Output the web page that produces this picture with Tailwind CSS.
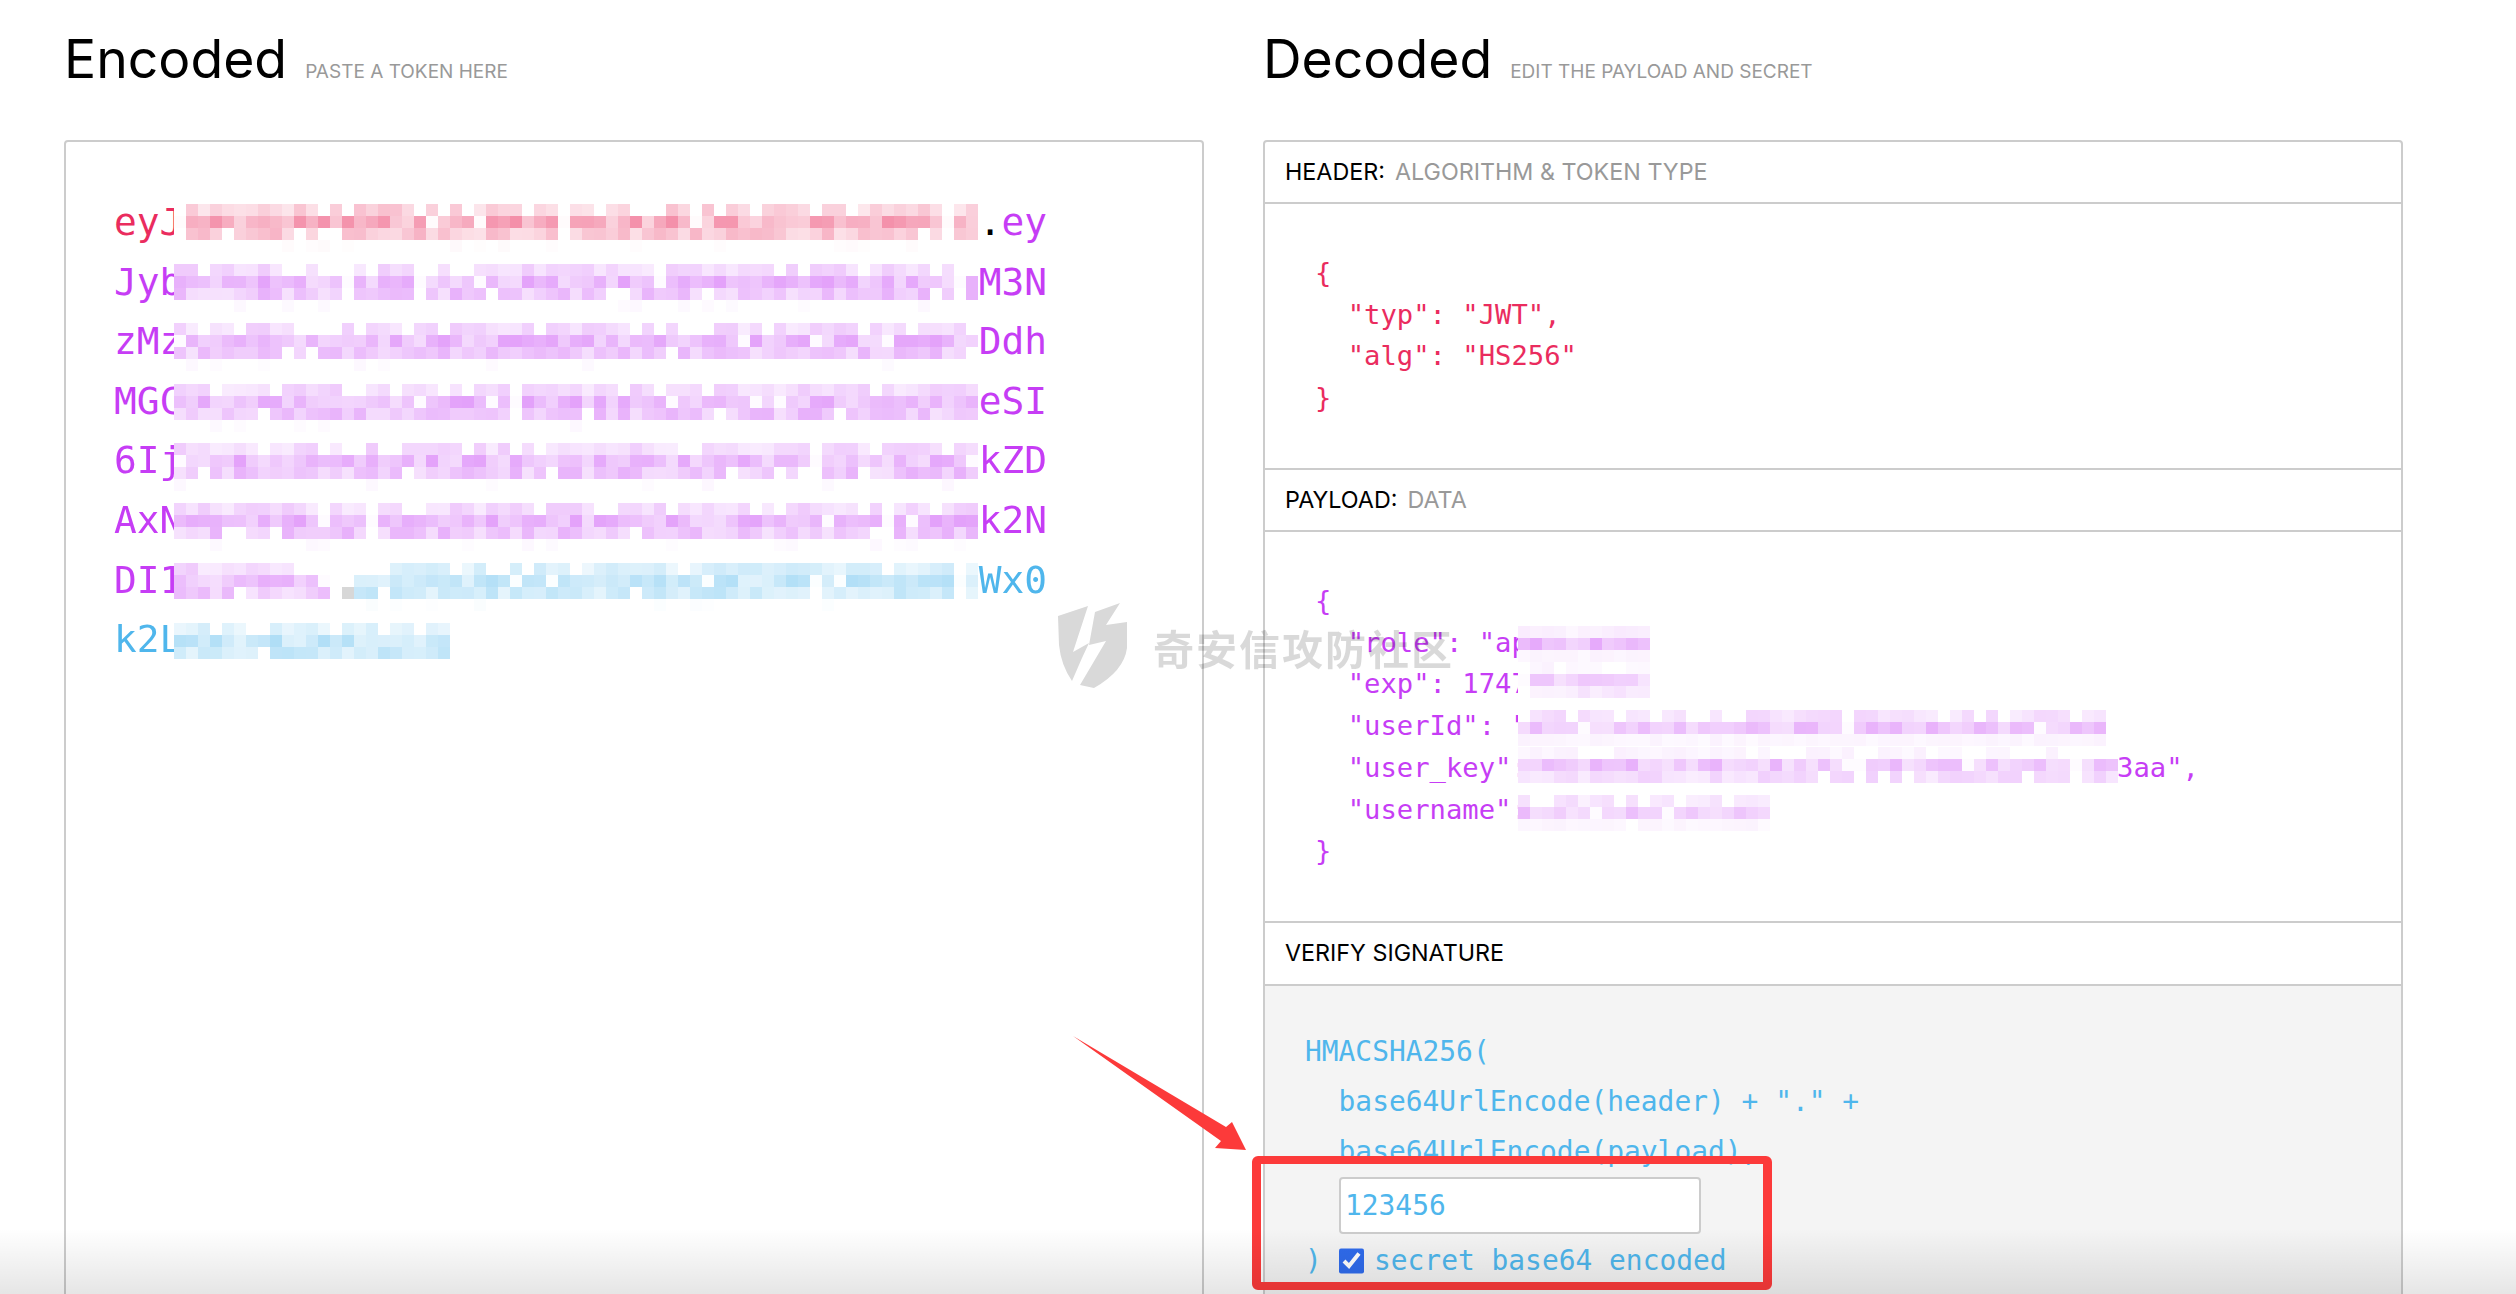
<!DOCTYPE html>
<html lang="en">
<head>
    <meta charset="UTF-8">
    <title>JWT Debugger</title>
    <script src="https://cdn.jsdelivr.net/npm/@tailwindcss/browser@4"></script>
</head>
<body class="bg-white font-['Inter',sans-serif]">
<div class="relative h-screen overflow-hidden">
    <main class="grid grid-cols-[1140px_1140px] gap-x-[59px] pl-[64px]">
        <!-- Encoded -->
        <section>
            <div class="flex items-baseline gap-[18px] h-[140px] pt-[26px]">
                <h2 class="text-[53.5px] leading-[66px] text-black">Encoded</h2>
                <span class="text-[19px] text-[#999]">PASTE A TOKEN HERE</span>
            </div>
            <div class="flex flex-col h-[1300px] border-2 border-[#ccc] rounded-[4px] pt-[51px] pl-[48px] font-['DejaVu_Sans_Mono',monospace] text-[37.8px] leading-[59.6px] whitespace-pre">
                <div class="relative text-[#ea2c5e]">eyJxxxxxxxxxxxxxxxxxxxxxxxxxxxxxxxxxxx<span class="text-black">.</span><span class="text-[#c63df5]">ey</span><canvas class="mosaic absolute left-[60px] top-[11px]" data-parts="pink:67" data-rows="0.22,0.4,0.28,0.02"></canvas></div>
                <div class="relative text-[#c63df5]">JybxxxxxxxxxxxxxxxxxxxxxxxxxxxxxxxxxxxM3N<canvas class="mosaic absolute left-[60px] top-[11px]" data-parts="purple:67" data-rows="0.2,0.36,0.3,0.03"></canvas></div>
                <div class="relative text-[#c63df5]">zMzxxxxxxxxxxxxxxxxxxxxxxxxxxxxxxxxxxxDdh<canvas class="mosaic absolute left-[60px] top-[11px]" data-parts="purple:67" data-rows="0.2,0.36,0.3,0.03"></canvas></div>
                <div class="relative text-[#c63df5]">MGCxxxxxxxxxxxxxxxxxxxxxxxxxxxxxxxxxxxeSI<canvas class="mosaic absolute left-[60px] top-[12px]" data-parts="purple:67" data-rows="0.2,0.36,0.3,0.03"></canvas></div>
                <div class="relative text-[#c63df5]">6IjxxxxxxxxxxxxxxxxxxxxxxxxxxxxxxxxxxxkZD<canvas class="mosaic absolute left-[60px] top-[12px]" data-parts="purple:67" data-rows="0.2,0.36,0.3,0.03"></canvas></div>
                <div class="relative text-[#c63df5]">AxNxxxxxxxxxxxxxxxxxxxxxxxxxxxxxxxxxxxk2N<canvas class="mosaic absolute left-[60px] top-[12px]" data-parts="purple:67" data-rows="0.2,0.36,0.3,0.03"></canvas></div>
                <div class="relative text-[#c63df5]">DI1xxxxxxxxxxxxxxxxxxxxxxxxxxxxxxxxxxx<span class="text-[#4fb6ec]">Wx0</span><canvas class="mosaic absolute left-[60px] top-[12px]" data-parts="purple:13,white:1,gray:1,blue:52" data-rows="0.2,0.34,0.28,0.02"></canvas></div>
                <div class="relative text-[#4fb6ec]">k2Lxxxxxxxxxx<canvas class="mosaic absolute left-[60px] top-[13px]" data-parts="blue:23" data-rows="0.18,0.34,0.3,0.03"></canvas></div>
            </div>
        </section>

        <!-- Decoded -->
        <section>
            <div class="flex items-baseline gap-[18px] h-[140px] pt-[26px]">
                <h2 class="text-[53.5px] leading-[66px] text-black">Decoded</h2>
                <span class="text-[19px] text-[#999]">EDIT THE PAYLOAD AND SECRET</span>
            </div>
            <div class="h-[1300px] border-2 border-[#ccc] rounded-[4px]">
                <div class="h-[62px] flex items-center pl-[20px] gap-[10px] border-b-2 border-[#ccc] text-[23.3px] text-black">
                    <span>HEADER:</span><span class="text-[#999]">ALGORITHM &amp; TOKEN TYPE</span>
                </div>
                <div class="h-[264px] pt-[48px] pl-[50px] font-['DejaVu_Sans_Mono',monospace] text-[27.2px] leading-[41.7px] whitespace-pre text-[#ea2c5e]">{
  "typ": "JWT",
  "alg": "HS256"
}</div>
                <div class="h-[64px] flex items-center pl-[20px] gap-[10px] border-y-2 border-[#ccc] text-[23.3px] text-black">
                    <span>PAYLOAD:</span><span class="text-[#999]">DATA</span>
                </div>
                <div class="h-[389px] pt-[48px] pl-[50px] font-['DejaVu_Sans_Mono',monospace] text-[27.2px] leading-[41.7px] whitespace-pre text-[#c63df5]"><div>{</div><div class="relative">  "role": "app",<canvas class="mosaic absolute left-[203px] top-[4px]" data-parts="purple:11" data-rows="0.08,0.35,0.05"></canvas></div><div class="relative">  "exp": 1747000000,<canvas class="mosaic absolute left-[203px] top-[-1px]" data-parts="purple:11" data-rows="0.06,0.24,0.12"></canvas></div><div class="relative">  "userId": "0000000000000000000000000"<canvas class="mosaic absolute left-[203px] top-[5px]" data-parts="purple:49" data-rows="0.16,0.3,0.05"></canvas></div><div class="relative">  "user_key": "00000000000000000000000000000000003aa",<canvas class="mosaic absolute left-[203px] top-[0px]" data-parts="purple:50" data-rows="0.06,0.3,0.18"></canvas></div><div class="relative">  "username": "xxxxxxxxxxx"<canvas class="mosaic absolute left-[203px] top-[6px]" data-parts="purple:21" data-rows="0.14,0.28,0.05"></canvas></div><div>}</div></div>
                <div class="h-[65px] flex items-center pl-[20px] border-y-2 border-[#ccc] text-[23.3px] text-black">VERIFY SIGNATURE</div>
                <div class="h-[400px] bg-[#f4f4f4] pt-[41px] pl-[40px] font-['DejaVu_Sans_Mono',monospace] text-[27.9px] leading-[50px] whitespace-pre text-[#4fb6ec]"><div>HMACSHA256(</div><div>  base64UrlEncode(header) + "." +</div><div>  base64UrlEncode(payload),</div><div class="pl-[34px] h-[57px]"><input type="text" value="123456" class="w-[362px] h-[57px] bg-white border-2 border-[#ccc] rounded-[4px] pl-[4px] text-[#4fb6ec] outline-none"></div><div class="flex items-center h-[54px]"><span class="w-[34px]">)</span><input type="checkbox" checked class="w-[25px] h-[26px] accent-[#2f6bec]"><span class="ml-[10px]">secret base64 encoded</span></div></div>
            </div>
        </section>
    </main>

    <!-- annotation: watermark, arrow and red frame sit on top of the screenshot -->
    <div class="absolute left-[1058px] top-[603px] flex items-center gap-[25px] pointer-events-none">
        <svg width="70" height="90" viewBox="0 0 70 90"><path fill="#d9d9d9" d="M0 13 L30 3 L15 49 L31 40 L24 55 L14 78 Q3 62 1 42 Z M37 9 L62 0 L48 22 L69 19 L69 45 Q66 68 36 85 L22 82 L48 38 L31 42 Z"/></svg>
        <span class="font-['Noto_Sans_CJK_SC',sans-serif] font-bold text-[41px] tracking-[2px] text-black/15">奇安信攻防社区</span>
    </div>

    <svg class="absolute left-[1060px] top-[1025px]" width="220" height="140" viewBox="0 0 220 140"><polygon fill="#fc3a3a" points="13,11 166,102 172,97 186,125 155,123 161,116"/></svg>

    <div class="absolute left-[1252px] top-[1156px] w-[520px] h-[134px] border-x-[9px] border-y-[8px] border-[#fc3a3a] rounded-[6px]"></div>

    <div class="absolute inset-x-0 bottom-0 h-[65px] bg-gradient-to-b from-black/0 to-black/10 pointer-events-none"></div>
</div>

<script>
    // pixelated blur blocks over the secret parts of the token
    const colors = { pink: [234, 44, 94], purple: [198, 61, 245], blue: [79, 182, 236], gray: [120, 120, 120], white: [255, 255, 255] };
    let seed = 7;
    function rand() {
        seed = (seed * 16807) % 2147483647;
        return seed / 2147483647;
    }
    document.querySelectorAll('.mosaic').forEach(c => {
        const cell = 12;
        const parts = c.dataset.parts.split(',').map(p => p.split(':'));
        const rows = c.dataset.rows.split(',').map(Number);
        const cols = parts.reduce((n, p) => n + Number(p[1]), 0);
        c.width = cols * cell;
        c.height = rows.length * cell;
        const ctx = c.getContext('2d');
        let x = 0;
        parts.forEach(([name, count]) => {
            for (let i = 0; i < Number(count); i++, x++) {
                const gap = rand() < 0.015; // now and then a column stays almost white top to bottom
                rows.forEach((base, y) => {
                    let a = base * (0.5 + rand() * 0.85);
                    if (gap || rand() < (y === 0 ? 0.25 : 0.06) || name === 'white') a = y === 1 ? 0.02 : 0;
                    if (name === 'gray') a = y === 2 ? 0.3 : 0;
                    if (base < 0.05 && rand() < 0.85) return; // the faint bottom row is only a few stray cells
                    const rgb = colors[name].map(v => Math.round(255 - (255 - v) * a));
                    ctx.fillStyle = `rgb(${rgb.join(',')})`;
                    ctx.fillRect(x * cell, y * cell, cell, cell);
                });
            }
        });
    });
</script>
</body>
</html>
